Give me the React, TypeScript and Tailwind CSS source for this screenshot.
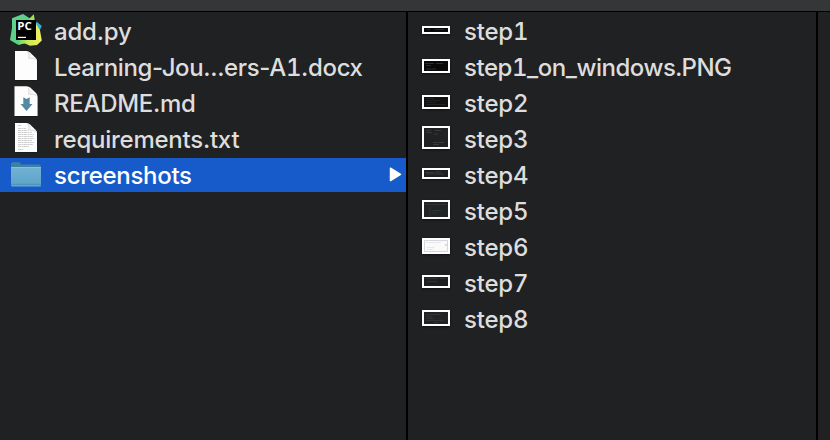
import type { ReactNode } from "react";

function PyCharmIcon() {
  return (
    <svg width="34" height="34" viewBox="0 0 34 34" className="block shrink-0">
      <defs>
        <linearGradient id="pcGreen" x1="0" y1="0" x2="1" y2="1">
          <stop offset="0" stopColor="#66d093" />
          <stop offset="1" stopColor="#4fd07a" />
        </linearGradient>
        <linearGradient id="pcYellow" x1="0" y1="0" x2="1" y2="0">
          <stop offset="0" stopColor="#6fd873" />
          <stop offset="0.4" stopColor="#c9ea55" />
          <stop offset="1" stopColor="#f8ee60" />
        </linearGradient>
      </defs>
      <path d="M26 8L29.3 8.2L33.8 12L31 18H26Z" fill="#2fb0dd" />
      <path d="M4 4.3L15 0L22 4.5L26 8V28L10 30.8L2 26L4 14Z" fill="url(#pcGreen)" />
      <path d="M21 5L25.8 0.3L27 8H22Z" fill="#a5df57" />
      <path d="M27 8L32 16.5L33.8 26.5L29 31L22 31.8L16 29L10.5 31L12 25H27Z" fill="url(#pcYellow)" />
      <rect x="8" y="6" width="20" height="20" fill="#000" />
      <text x="9.3" y="15.6" fill="#fff" className="font-['Open_Sans',sans-serif] text-[11px] font-bold" textLength="14.5" lengthAdjust="spacingAndGlyphs">PC</text>
      <rect x="10" y="22.8" width="8" height="1.2" fill="#fff" />
    </svg>
  );
}

function DocIcon({ kind }: { kind: "blank" | "md" | "txt" }) {
  return (
    <svg width="34" height="34" viewBox="0 0 34 34" className="block shrink-0">
      <path d="M7 2H20.5L29.3 10.5V30.8H7Z" fill="#111213" opacity="0.6" />
      {kind === "md" ? (
        <path d="M6.5 0.3H18.5Q21 0.5 22.5 1.7L28 7Q29.6 9 29.6 11V30H6.5Z" fill="#fdfdfd" />
      ) : (
        <path d="M7 1H18.5Q20.5 1.1 22 2.5L27.5 7.8Q29 9.3 29 11V30H7Z" fill="#fdfdfd" />
      )}
      <path d="M20.5 1.8Q21.3 5 20.5 8.3Q25 8 28.6 9.5" fill="#f4f4f4" stroke="#c9c9c9" strokeWidth="0.6" />
      {kind === "md" && (
        <path d="M15.3 11.2L18.5 13L21.7 11.2V18H24.5L18.5 25L12.5 18H15.3Z" fill="#5489a4" />
      )}
      {kind === "txt" && (
        <path
          d="M10 3.5H13M10 6.5H18M10 8.5H20M10 10.5H24M10 12.5H26M10 14.5H25M10 16.5H26M10 18.5H24M10 20.5H26M10 22.5H25M10 24.5H21M10 27.5H15"
          stroke="#c2c2c2"
          strokeWidth="0.8"
          strokeDasharray="3 0.5 2 0.4"
        />
      )}
    </svg>
  );
}

function FolderIcon() {
  return (
    <svg width="34" height="34" viewBox="0 0 34 34" className="block shrink-0">
      <defs>
        <linearGradient id="folderFront" x1="0" y1="0" x2="0" y2="1">
          <stop offset="0" stopColor="#70b2d5" />
          <stop offset="1" stopColor="#5ea3c9" />
        </linearGradient>
      </defs>
      <path d="M3 6.5Q3 4.3 5 4.3H10.5Q12 4.3 12.5 5.5L13.3 6.5H31Q32.8 6.5 32.8 8V12H3Z" fill="#3f81a3" />
      <path d="M3 9.5Q3 9 4 9H32Q33 9 33 10V27Q33 28.2 32 28.2H4Q3 28.2 3 27Z" fill="url(#folderFront)" />
      <path d="M3 9.5H33" stroke="#8bc4e1" strokeWidth="0.8" />
      <path d="M3 26.4H33" stroke="#4a8eb6" strokeWidth="0.8" />
      <path d="M3.5 28H32.5" stroke="#6fadcf" strokeWidth="0.7" />
    </svg>
  );
}

function Thumb({ size, fill, children }: { size: string; fill: string; children?: ReactNode }) {
  return (
    <span className={`block w-7 shrink-0 border-2 border-white shadow-[0_1px_2px_rgba(0,0,0,0.5)] ${size} ${fill}`}>
      <svg width="100%" height="100%" className="block">{children}</svg>
    </span>
  );
}

const files = [
  { name: "add.py", icon: <PyCharmIcon />, track: "tracking-[-0.2px]" },
  { name: <>Learning-Jou...ers-A<span className="tabular-nums">1</span>.docx</>, icon: <DocIcon kind="blank" />, track: "tracking-[-0.36px]" },
  { name: "README.md", icon: <DocIcon kind="md" />, track: "tracking-[-0.3px]" },
  { name: "requirements.txt", icon: <DocIcon kind="txt" />, track: "tracking-[-0.25px]" },
  { name: "screenshots", icon: <FolderIcon />, track: "tracking-[-0.3px]", selected: true },
];

const shots = [
  { name: "step1", size: "-mt-0.5 h-2", fill: "bg-[#090909]", art: <path d="M3 1.5H6M11 1.5H20" stroke="#333" strokeWidth="0.7" /> },
  { name: "step1_on_windows.PNG", size: "-mt-0.5 h-3.5", fill: "bg-[#080809]", track: "tracking-[-0.45px]", art: <path d="M1 2.5H10M12 2.5H19M2 4.5H7M2 8H12" stroke="#343638" strokeWidth="0.8" /> },
  { name: "step2", size: "-mt-0.5 h-3.5", fill: "bg-[#111111]", art: <path d="M2 1.5H10M2 3.5H16M2 5.5H12M2 7.5H22" stroke="#272727" strokeWidth="0.8" /> },
  { name: "step3", size: "-mt-[3px] h-[23px]", fill: "bg-[#202122]", art: <path d="M2 2.5H7M11 2.5H17M2 4.5H8M10 6H14M9 14.5H20M9 16.5H15" stroke="#3e4141" strokeWidth="0.8" /> },
  { name: "step4", size: "-mt-[3px] h-[11px]", fill: "bg-[#1f2121]", art: <path d="M1 2.5H10M2 4H20M11 2H17" stroke="#3e4444" strokeWidth="0.8" /> },
  { name: "step5", size: "-mt-[3px] h-[19px]", fill: "bg-[#222526]", art: <path d="M1 2.5H23M6 5V14M8 8.5H17M8 11H13" stroke="#333838" strokeWidth="0.8" /> },
  { name: "step6", size: "-mt-0.5 h-4", fill: "bg-[#fafafa]", art: <g><path d="M0.5 0.5H23.5V11.5H0.5Z" fill="none" stroke="#d6d7da" /><path d="M2 2.5H17M3 7.5H10M3 9.5H9" stroke="#dfe2ea" strokeWidth="0.8" /><path d="M21 4H23V6H21Z" fill="#c6e4cc" /></g> },
  { name: "step7", size: "-mt-[3px] h-[13px]", fill: "bg-[#1d1f21]", art: <path d="M1 1.5H14M3 4.5H13M16 1.5H22" stroke="#33383c" strokeWidth="0.8" /> },
  { name: "step8", size: "-mt-0.5 h-4", fill: "bg-[#222323]", art: <path d="M2 2.5H17M2 4.5H8M2 6.5H9M2 8.5H20M11 10.5H14" stroke="#353838" strokeWidth="0.8" /> },
];

export default function App() {
  return (
    <div className="flex h-[440px] w-[830px] flex-col overflow-hidden bg-[#202123] font-['Inter',sans-serif] text-[24px] leading-[34px] font-medium text-[#dddddd]">
      <header className="h-3 shrink-0 border-b border-black bg-[#353638]" />
      <main className="flex flex-1">
        <section className="flex w-[408px] flex-col gap-0.5 border-r-2 border-black pt-0.5">
          {files.map((f, i) => (
            <div key={i} className={`flex h-[34px] items-center pl-2 ${f.selected ? "bg-[#175bcb] text-white" : ""}`}>
              {f.icon}
              <span className={`ml-3 pt-0.5 whitespace-nowrap ${f.track}`}>{f.name}</span>
              {f.selected && (
                <svg width="13" height="16" viewBox="0 0 13 16" className="mr-1 ml-auto">
                  <path d="M1.5 1.2L11.5 7.3L1.5 13.5Z" fill="#fff" stroke="#fff" strokeWidth="1.5" strokeLinejoin="round" />
                </svg>
              )}
            </div>
          ))}
        </section>
        <section className="flex w-[410px] flex-col gap-0.5 border-r-2 border-black pt-0.5 tabular-nums">
          {shots.map((s) => (
            <div key={s.name} className="flex h-[34px] items-center pl-3.5">
              <div className="shrink-0">
                <Thumb size={s.size} fill={s.fill}>{s.art}</Thumb>
              </div>
              <span className={`ml-3.5 pt-0.5 whitespace-nowrap ${s.track ?? "tracking-[-0.2px]"}`}>{s.name}</span>
            </div>
          ))}
        </section>
      </main>
    </div>
  );
}
